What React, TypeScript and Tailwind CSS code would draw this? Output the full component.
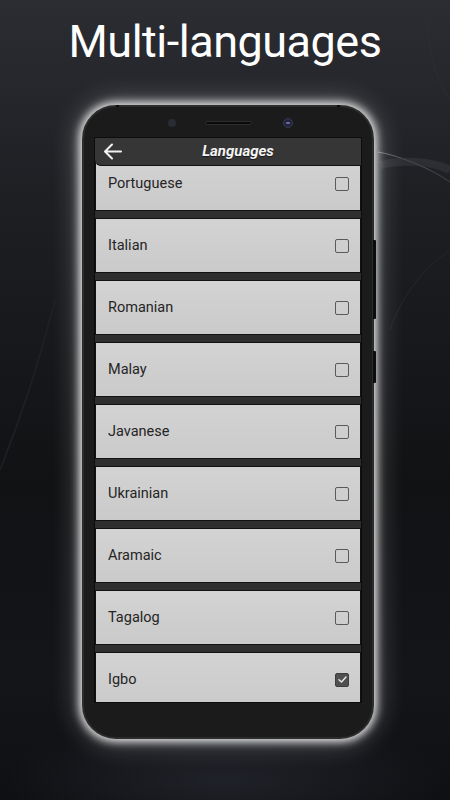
import React from "react";

const langs = [
  { name: "Portuguese", checked: false },
  { name: "Italian", checked: false },
  { name: "Romanian", checked: false },
  { name: "Malay", checked: false },
  { name: "Javanese", checked: false },
  { name: "Ukrainian", checked: false },
  { name: "Aramaic", checked: false },
  { name: "Tagalog", checked: false },
  { name: "Igbo", checked: true },
];

function Checkbox({ checked }: { checked: boolean }) {
  if (checked) {
    return (
      <div className="w-[14px] h-[14px] rounded-[2px] bg-[#505050] border border-[#3e3e3e] flex items-center justify-center">
        <svg width="11" height="11" viewBox="0 0 12 12">
          <path d="M2.2 6.3 L4.9 8.8 L9.8 3.4" fill="none" stroke="#e8e8e8" strokeWidth="1.6" strokeLinecap="round" strokeLinejoin="round" />
        </svg>
      </div>
    );
  }
  return <div className="w-[14px] h-[14px] rounded-[2px] border-[1.5px] border-[#5a5a5a]" />;
}

export default function App() {
  return (
    <div
      className="relative w-[450px] h-[800px] overflow-hidden flex flex-col items-center bg-[linear-gradient(180deg,#2b2d32_0%,#1d1f23_25%,#111214_60%,#141519_85%,#0f1013_100%)]"
      style={{ fontFamily: "Roboto, 'Open Sans', sans-serif" }}
    >
      <svg className="absolute inset-0" width="450" height="800" viewBox="0 0 450 800">
        <defs>
          <radialGradient id="bl" cx="0.5" cy="0.5" r="0.5">
            <stop offset="0" stopColor="#2a2d36" stopOpacity="0.6" />
            <stop offset="1" stopColor="#2a2d36" stopOpacity="0" />
          </radialGradient>
          <linearGradient id="arc" x1="0" y1="0" x2="1" y2="0">
            <stop offset="0" stopColor="#8a8d95" stopOpacity="0.7" />
            <stop offset="1" stopColor="#6a6d75" stopOpacity="0.3" />
          </linearGradient>
        </defs>
        <ellipse cx="225" cy="780" rx="220" ry="60" fill="url(#bl)" />
        <path d="M378 152 C 400 156, 430 168, 450 182" stroke="url(#arc)" strokeWidth="1.2" fill="none" />
        <path d="M380 165 C 400 160, 430 160, 450 170" stroke="#3a3c42" strokeOpacity="0.5" strokeWidth="8" fill="none" />
        <path d="M390 330 C 400 300, 420 270, 450 250" stroke="#25272c" strokeWidth="1" fill="none" />
        <path d="M0 470 C 20 420, 40 360, 55 300" stroke="#1f2126" strokeWidth="1.5" fill="none" />
        <path d="M430 0 C 425 30, 430 70, 450 100" stroke="#2c2e33" strokeWidth="1" fill="none" />
      </svg>

      <h1 className="relative mt-[14px] text-[45px] leading-[56px] tracking-[-0.5px] text-white font-normal">
        Multi-languages
      </h1>

      <div className="relative mt-[35px] ml-[6px] w-[292px] h-[634px] rounded-[34px] bg-[#1b1b1b] border-2 border-[#2c2c2c] shadow-[0_0_8px_3px_rgba(255,255,255,0.85),0_0_26px_6px_rgba(255,255,255,0.25)] flex flex-col items-center">
        {/* side buttons */}
        <div className="absolute right-[-4px] top-[133px] w-[3px] h-[79px] bg-[#0c0c0c] rounded-r-[1px]" />
        <div className="absolute right-[-4px] top-[244px] w-[3px] h-[32px] bg-[#0c0c0c] rounded-r-[1px]" />
        <div className="absolute left-[32px] top-[-2px] w-[3px] h-[2px] bg-[#0a0a0a]" />
        <div className="absolute right-[32px] top-[-2px] w-[3px] h-[2px] bg-[#0a0a0a]" />

        {/* top bezel */}
        <div className="h-[30px] w-full flex items-center justify-center relative">
          <div className="absolute left-[84px] top-[12px] w-[8px] h-[8px] rounded-full bg-[#2a2c34]" />
          <div className="absolute left-[121px] top-[14px] w-[47px] h-[4px] rounded-full bg-[#0a0a0a] border border-[#2e2e2e]" />
          <div className="absolute left-[199px] top-[11px] w-[10px] h-[10px] rounded-full bg-[#23233a] border border-[#3a3a55] flex items-center justify-center">
            <div className="w-[4px] h-[2px] bg-[#6c6cae] rounded-full" />
          </div>
        </div>

        {/* screen */}
        <div className="w-[268px] h-[566px] bg-[#2f2f2f] border border-[#0c0c0c] overflow-hidden flex flex-col">
          <div className="h-[28px] shrink-0 bg-[#363636] relative flex items-center justify-center z-10 border-b border-[#111] rounded-bl-[6px]">
            <svg className="absolute left-[8px] top-[5px]" width="19" height="17" viewBox="0 0 19 17">
              <path d="M18 8.5 H2.5 M9 1.5 L2 8.5 L9 15.5" fill="none" stroke="#f2f2f2" strokeWidth="2" strokeLinecap="round" strokeLinejoin="round" />
            </svg>
            <span className="ml-[20px] text-[15px] font-bold italic text-[#f4f4f4] [text-shadow:0_1px_1px_rgba(0,0,0,0.6)]">
              Languages
            </span>
          </div>
          <div className="flex flex-col gap-[7px] mt-[-10px]">
            {langs.map((l) => (
              <div
                key={l.name}
                className="h-[55px] shrink-0 bg-[linear-gradient(180deg,#d3d3d3,#cacaca)] border border-[#121212] flex items-center justify-between pl-[12px] pr-[11px]"
              >
                <span className="text-[14.5px] text-[#252525]">{l.name}</span>
                <Checkbox checked={l.checked} />
              </div>
            ))}
          </div>
        </div>
      </div>
    </div>
  );
}
